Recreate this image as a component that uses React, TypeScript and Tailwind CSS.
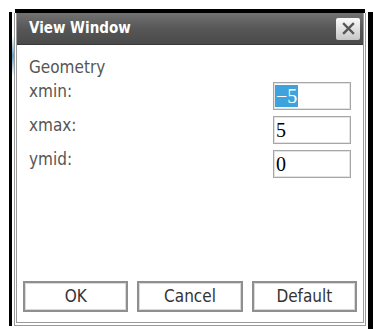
import React from 'react';

const labelFont = "font-['DejaVu_Sans_Condensed','DejaVu_Sans',sans-serif] font-stretch-condensed";

const rows = [
    { label: 'xmin:', value: '\u22125', selected: true },
    { label: 'xmax:', value: '5', selected: false },
    { label: 'ymid:', value: '0', selected: false },
];

const App: React.FC = () => {
    return (
        <div className="flex h-[329px] w-[373px] overflow-hidden bg-white">
            <div className="w-[9px] shrink-0" />
            <div className="mt-[12px] h-[314px] w-[3px] shrink-0 bg-black" />
            <div className="w-[2px] shrink-0 pt-[36px]">
                <div className="h-[40px] w-[2px] bg-gradient-to-b from-transparent via-[#5aa6cf] to-transparent" />
            </div>

            <div className="mt-[9px] flex h-[317px] w-[352px] shrink-0 flex-col">
                <div className="mx-[1px] h-[4px] bg-black" />
                <div className="flex flex-1 flex-col border-x-[3px] border-b-[4px] border-t-0 border-double border-[#9a9a9a]">
                    {/* title bar */}
                    <div className="flex h-[32px] items-center border-b border-[#3a3a3a] bg-gradient-to-b from-[#727272] via-[#575757] to-[#4a4a4a]">
                        <span className={`${labelFont} pl-[12px] text-[15px] font-bold text-white`}>View Window</span>
                        <button className="ml-auto mr-[3px] flex h-[22px] w-[24px] items-center justify-center rounded-[2px] bg-gradient-to-b from-[#fbfbfb] to-[#c6c6c6]">
                            <svg width="13" height="13" viewBox="0 0 13 13" fill="none" stroke="#555" strokeWidth="2.4" strokeLinecap="square">
                                <path d="M2 2l9 9M11 2l-9 9" />
                            </svg>
                        </button>
                    </div>

                    {/* content */}
                    <div className={`${labelFont} flex flex-1 flex-col px-[12px] pt-[12px] text-[#555]`}>
                        <div className="text-[17px] leading-[20px]">Geometry</div>
                        <div className="mt-[5px] flex flex-col gap-[6px]">
                            {rows.map((r) => (
                                <div key={r.label} className="flex h-[28px] items-start">
                                    <span className="text-[17px] leading-[18px]">{r.label}</span>
                                    <div className="ml-auto h-[28px] w-[78px] border border-[#a6a6a6] bg-white pl-[1px] font-['Liberation_Serif',serif] text-[20px] leading-[26px] text-black shadow-[inset_0_0_0_1px_#e4e4e4]">
                                        {r.selected ? <span className="bg-[#3ea3dc] px-[1px] text-white">{r.value}</span> : <span className="pl-[1px]">{r.value}</span>}
                                    </div>
                                </div>
                            ))}
                        </div>

                        <div className="mx-[-6px] mt-auto grid grid-cols-3 gap-[9px] pb-[10px]">
                            {['OK', 'Cancel', 'Default'].map((b) => (
                                <button key={b} className="flex h-[31px] items-center justify-center border-2 border-[#8f8f8f] bg-white text-[17px] text-[#333] shadow-[inset_0_0_0_1px_#dadada]">
                                    {b}
                                </button>
                            ))}
                        </div>
                    </div>
                </div>
            </div>

            <div className="w-[2px] shrink-0" />
            <div className="mt-[12px] w-[5px] shrink-0 bg-black" />
        </div>
    );
};

export default App;
